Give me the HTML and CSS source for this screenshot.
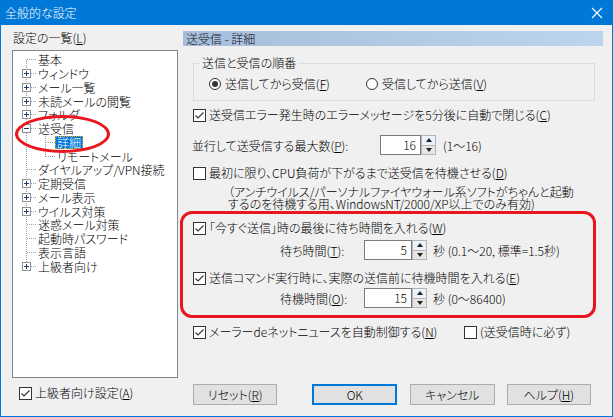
FILE: index.html
```html
<!DOCTYPE html>
<html lang="ja">
<head>
<meta charset="UTF-8">
<title>全般的な設定</title>
<link rel="stylesheet" href="styles.css">
</head>
<body>
<div class="dlg">
    <div class="titlebar">
        <span class="title">全般的な設定</span>
        <svg class="close" width="12" height="12" viewBox="0 0 12 12"><path d="M1 1L11 11M11 1L1 11" stroke="#fff" stroke-width="1.1"/></svg>
    </div>

    <div class="main">
        <!-- 左: 設定ツリー -->
        <div class="left">
            <div class="lbl">設定の一覧(<u>L</u>)</div>
            <div class="tree">
                <div class="vline"></div>
                <div class="vline sub"></div>
                <div class="node"><i class="dash long"></i><span class="t">基本</span></div>
                <div class="node"><svg class="knob" width="9" height="9" viewBox="0 0 9 9"><rect x=".5" y=".5" width="8" height="8" fill="#fff" stroke="#919191"/><path d="M2 4.5h5M4.5 2v5" stroke="#1c3f7a"/></svg><i class="dash"></i><span class="t">ウィンドウ</span></div>
                <div class="node"><svg class="knob" width="9" height="9" viewBox="0 0 9 9"><rect x=".5" y=".5" width="8" height="8" fill="#fff" stroke="#919191"/><path d="M2 4.5h5M4.5 2v5" stroke="#1c3f7a"/></svg><i class="dash"></i><span class="t">メール一覧</span></div>
                <div class="node"><svg class="knob" width="9" height="9" viewBox="0 0 9 9"><rect x=".5" y=".5" width="8" height="8" fill="#fff" stroke="#919191"/><path d="M2 4.5h5M4.5 2v5" stroke="#1c3f7a"/></svg><i class="dash"></i><span class="t">未読メールの閲覧</span></div>
                <div class="node"><svg class="knob" width="9" height="9" viewBox="0 0 9 9"><rect x=".5" y=".5" width="8" height="8" fill="#fff" stroke="#919191"/><path d="M2 4.5h5M4.5 2v5" stroke="#1c3f7a"/></svg><i class="dash"></i><span class="t">フォルダ</span></div>
                <div class="node"><svg class="knob" width="9" height="9" viewBox="0 0 9 9"><rect x=".5" y=".5" width="8" height="8" fill="#fff" stroke="#919191"/><path d="M2 4.5h5" stroke="#1c3f7a"/></svg><i class="dash"></i><span class="t">送受信</span></div>
                <div class="node child"><i class="dash long"></i><span class="t sel">詳細</span></div>
                <div class="node child"><i class="dash long"></i><span class="t">リモートメール</span></div>
                <div class="node"><i class="dash long"></i><span class="t">ダイヤルアップ/VPN接続</span></div>
                <div class="node"><svg class="knob" width="9" height="9" viewBox="0 0 9 9"><rect x=".5" y=".5" width="8" height="8" fill="#fff" stroke="#919191"/><path d="M2 4.5h5M4.5 2v5" stroke="#1c3f7a"/></svg><i class="dash"></i><span class="t">定期受信</span></div>
                <div class="node"><svg class="knob" width="9" height="9" viewBox="0 0 9 9"><rect x=".5" y=".5" width="8" height="8" fill="#fff" stroke="#919191"/><path d="M2 4.5h5M4.5 2v5" stroke="#1c3f7a"/></svg><i class="dash"></i><span class="t">メール表示</span></div>
                <div class="node"><svg class="knob" width="9" height="9" viewBox="0 0 9 9"><rect x=".5" y=".5" width="8" height="8" fill="#fff" stroke="#919191"/><path d="M2 4.5h5M4.5 2v5" stroke="#1c3f7a"/></svg><i class="dash"></i><span class="t">ウイルス対策</span></div>
                <div class="node"><i class="dash long"></i><span class="t">迷惑メール対策</span></div>
                <div class="node"><i class="dash long"></i><span class="t">起動時パスワード</span></div>
                <div class="node"><i class="dash long"></i><span class="t">表示言語</span></div>
                <div class="node"><svg class="knob" width="9" height="9" viewBox="0 0 9 9"><rect x=".5" y=".5" width="8" height="8" fill="#fff" stroke="#919191"/><path d="M2 4.5h5M4.5 2v5" stroke="#1c3f7a"/></svg><i class="dash"></i><span class="t">上級者向け</span></div>
            </div>
            <div class="chk adv"><span class="box"><svg width="11" height="11" viewBox="0 0 11 11"><path d="M1.5 5.5L4 8L9.5 2.5" fill="none" stroke="#333" stroke-width="1.1"/></svg></span>上級者向け設定(<u>A</u>)</div>
        </div>

        <!-- 右: 送受信 - 詳細 -->
        <div class="right">
            <div class="head">送受信 - 詳細</div>

            <div class="group">
                <span class="legend">送信と受信の順番</span>
                <div class="radios">
                    <div class="rad first"><span class="dot on"></span>送信してから受信(<u>F</u>)</div>
                    <div class="rad"><span class="dot"></span>受信してから送信(<u>V</u>)</div>
                </div>
            </div>

            <div class="chk c1"><span class="box"><svg width="11" height="11" viewBox="0 0 11 11"><path d="M1.5 5.5L4 8L9.5 2.5" fill="none" stroke="#333" stroke-width="1.1"/></svg></span>送受信エラー発生時のエラーメッセージを5分後に自動で閉じる(<u>C</u>)</div>

            <div class="row par">
                <span class="rlabel wide">並行して送受信する最大数(<u>P</u>):</span>
                <span class="spin"><span class="field f1">16</span><span class="arrows"><i class="up"></i><i class="dn"></i></span></span>
                <span class="suffix">(1〜16)</span>
            </div>

            <div class="chk c2"><span class="box"></span>最初に限り、CPU負荷が下がるまで送受信を待機させる(<u>D</u>)</div>
            <div class="note">（アンチウイルス/パーソナルファイヤウォール系ソフトがちゃんと起動<br>するのを待機する用、WindowsNT/2000/XP以上でのみ有効)</div>

            <div class="chk c3"><span class="box"><svg width="11" height="11" viewBox="0 0 11 11"><path d="M1.5 5.5L4 8L9.5 2.5" fill="none" stroke="#333" stroke-width="1.1"/></svg></span>「今すぐ送信」時の最後に待ち時間を入れる(<u>W</u>)</div>
            <div class="row wait1">
                <span class="rlabel">待ち時間(<u>T</u>):</span>
                <span class="spin"><span class="field">5</span><span class="arrows"><i class="up"></i><i class="dn"></i></span></span>
                <span class="suffix">秒 (0.1〜20, 標準=1.5秒)</span>
            </div>

            <div class="chk c4"><span class="box"><svg width="11" height="11" viewBox="0 0 11 11"><path d="M1.5 5.5L4 8L9.5 2.5" fill="none" stroke="#333" stroke-width="1.1"/></svg></span>送信コマンド実行時に、実際の送信前に待機時間を入れる(<u>E</u>)</div>
            <div class="row wait2">
                <span class="rlabel">待機時間(<u>O</u>):</span>
                <span class="spin"><span class="field">15</span><span class="arrows"><i class="up"></i><i class="dn"></i></span></span>
                <span class="suffix">秒 (0〜86400)</span>
            </div>

            <div class="pair">
                <div class="chk c5"><span class="box"><svg width="11" height="11" viewBox="0 0 11 11"><path d="M1.5 5.5L4 8L9.5 2.5" fill="none" stroke="#333" stroke-width="1.1"/></svg></span>メーラーdeネットニュースを自動制御する(<u>N</u>)</div>
                <div class="chk"><span class="box"></span>(送受信時に必ず)</div>
            </div>

            <div class="buttons">
                <div class="btn reset">リセット(<u>R</u>)</div>
                <div class="btn ok">OK</div>
                <div class="btn">キャンセル</div>
                <div class="btn">ヘルプ(<u>H</u>)</div>
            </div>
        </div>
    </div>

    <!-- 赤い注釈 -->
    <div class="ring"></div>
    <div class="frame"></div>
</div>
</body>
</html>
```

FILE: styles.css
```css
*{box-sizing:border-box;}
body{margin:0;background:#fff;font-family:"Noto Sans CJK JP","Yu Gothic UI",sans-serif;font-size:12px;font-weight:300;color:#000;font-feature-settings:"palt";}
u{text-decoration:underline;text-underline-offset:1px;}
i{display:block;}

.dlg{position:relative;width:613px;height:417px;background:#f0f0f0;border:1px solid #0078d7;border-top:0;display:flex;flex-direction:column;overflow:hidden;}
.titlebar{height:25px;flex:none;background:#0078d7;color:#fff;display:flex;align-items:center;justify-content:space-between;padding:0 9px 0 4px;}
.title{line-height:14px;}

.main{flex:1;display:flex;padding-left:11px;}

/* 左側 */
.left{width:166px;display:flex;flex-direction:column;}
.lbl{margin-top:6px;height:14px;line-height:14px;padding-left:1px;}
.tree{position:relative;margin-top:5px;height:328px;border:1px solid #828790;background:#fff;padding-top:2px;}
.vline{position:absolute;left:13px;top:9px;height:206px;border-left:1px dotted #a0a0a0;}
.vline.sub{left:32px;top:85px;height:21px;}
.node{display:flex;align-items:center;height:13.75px;white-space:nowrap;}
.knob{position:relative;margin-left:9px;flex:none;}
.dash{height:0;width:5px;border-top:1px dotted #a0a0a0;flex:none;}
.dash.long{margin-left:14px;width:9px;}
.child .dash.long{margin-left:33px;}
.t{padding:0 2px;line-height:13px;}
.t.sel{background:#0078d7;color:#fff;outline:1px dotted #f5a623;outline-offset:-1px;}
.adv{margin-top:8px;margin-left:7px;}

/* チェックボックス・ラジオ */
.chk{display:flex;align-items:center;height:14px;line-height:14px;white-space:nowrap;}
.box{width:13px;height:13px;border:1px solid #333;background:#fff;margin-right:3px;flex:none;display:flex;align-items:center;justify-content:center;}
.dot{width:12px;height:12px;border:1px solid #333;border-radius:50%;background:#fff;margin-right:4px;flex:none;display:flex;align-items:center;justify-content:center;}
.dot.on::after{content:"";width:6px;height:6px;border-radius:50%;background:#333;}

/* 右側 */
.right{width:420px;margin-left:5px;display:flex;flex-direction:column;}
.head{margin-top:6px;height:15px;line-height:15px;padding-left:3px;background:linear-gradient(to right,#a6bedb,#bdd4ed);color:#111;}

.group{position:relative;margin:17px 0 0 10px;width:402px;height:38px;border:1px solid #dcdcdc;}
.legend{position:absolute;left:6px;top:-8px;line-height:14px;padding:0 2px;background:#f0f0f0;}
.radios{display:flex;padding-top:13px;padding-left:15px;}
.rad{display:flex;align-items:center;height:14px;line-height:14px;}
.rad.first{width:157px;}

.c1{margin:7px 0 0 10px;}
.row{display:flex;align-items:center;height:20px;white-space:nowrap;}
.par{margin-top:13px;padding-left:9px;}
.rlabel{width:84px;}
.rlabel.wide{width:188px;}
.spin{display:flex;height:20px;}
.field{width:41px;height:20px;border:1px solid #7a7a7a;background:#fff;text-align:right;padding-right:4px;line-height:18px;}
.field.f1{width:41px;}
.wait1 .field,.wait2 .field{width:48px;}
.arrows{width:15px;display:flex;flex-direction:column;}
.arrows i{flex:1;background:#e6e6e6;border:1px solid #b4b4b4;display:flex;align-items:center;justify-content:center;}
.arrows i.up{border-bottom:0;background:#eaf2fb;}
.arrows i::after{content:"";border-left:3.5px solid transparent;border-right:3.5px solid transparent;}
.arrows i.up::after{border-bottom:4px solid #222;}
.arrows i.dn::after{border-top:4px solid #222;}
.suffix{margin-left:6px;}
.par .suffix{margin-left:7px;}

.c2{margin:11px 0 0 10px;}
.note{margin-top:6px;padding-left:45px;line-height:11.5px;white-space:nowrap;}
.c3{margin:12px 0 0 10px;}
.wait1{margin-top:5px;padding-left:97px;}
.c4{margin:11px 0 0 10px;}
.wait2{margin-top:3px;padding-left:97px;}
.pair{display:flex;margin:17px 0 0 10px;}
.c5{width:271px;}

.buttons{display:flex;margin-top:auto;margin-bottom:11px;padding-left:10px;}
.btn{width:86px;height:21px;line-height:19px;text-align:center;background:#e1e1e1;border:1px solid #adadad;}
.btn.reset{margin-right:35px;}
.btn.ok{border:2px solid #0078d7;line-height:17px;margin-right:13px;}
.btn+.btn+.btn{margin-right:12px;}

/* 注釈 */
.ring{position:absolute;left:14px;top:115px;width:95px;height:38px;border:3px solid #e8161f;border-radius:50%;}
.frame{position:absolute;left:179px;top:211px;width:416px;height:107px;border:3px solid #e8161f;border-radius:12px;}
```
